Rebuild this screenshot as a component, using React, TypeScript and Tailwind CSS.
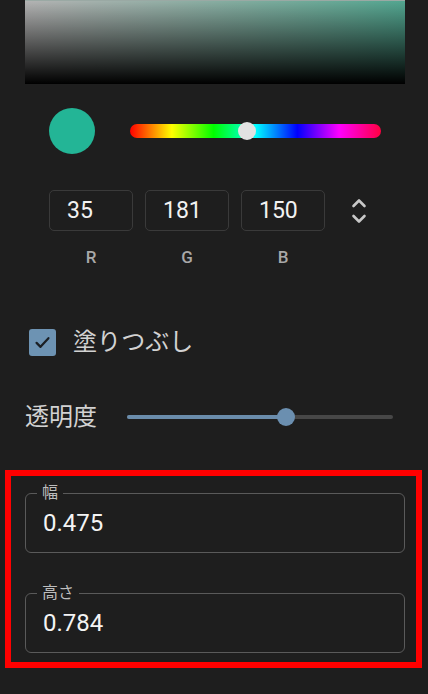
import React from 'react';

const font = { fontFamily: 'Roboto, "Noto Sans CJK JP", sans-serif' };

function RgbBox({ value }: { value: number }) {
  return (
    <div className="w-[84px] h-[41px] rounded-[5px] border border-[#3a3a3a] flex items-center pl-[17px] pt-[2px] text-[23px] text-[#f2f2f2]">
      {value}
    </div>
  );
}

function OutlinedField({ label, value }: { label: string; value: string }) {
  return (
    <fieldset className="border border-[#5a5a5a] rounded-[6px] h-[68px] px-[17px]">
      <legend className="ml-[-6px] px-[5px] text-[16px] leading-[16px] text-[#bdbdbd]">{label}</legend>
      <div className="text-[24px] leading-[28px] text-[#f4f4f4] mt-[8px]">{value}</div>
    </fieldset>
  );
}

export default function App() {
  const rgb = [35, 181, 150];
  return (
    <div className="w-[428px] h-[694px] bg-[#1e1e1e] overflow-hidden" style={font}>
      {/* saturation / value area */}
      <div className="ml-[25px] w-[380px] h-[84px] bg-gradient-to-r from-[#b3b3b3] to-[#52a690] border-t border-[#9aa9a4]">
        <div className="w-full h-full bg-gradient-to-b from-black/0 to-black" />
      </div>

      {/* swatch + hue */}
      <div className="flex items-center mt-[24px] pl-[49px] pr-[47px] gap-[35px]">
        <div className="w-[46px] h-[46px] rounded-full bg-[#23b596] shrink-0" />
        <div className="relative flex-1 h-[14px] rounded-full bg-[linear-gradient(to_right,#ff0000,#ffff00,#00ff00,#00ffff,#0000ff,#ff00ff,#ff0040)]">
          <div className="absolute left-[108px] top-[-2px] w-[18px] h-[18px] rounded-full bg-[#e2e2e2]" />
        </div>
      </div>

      {/* rgb inputs */}
      <div className="flex items-center mt-[36px] pl-[49px]">
        <div className="flex gap-[12px]">
          {rgb.map((v, i) => (
            <RgbBox key={i} value={v} />
          ))}
        </div>
        <svg className="ml-[26px]" width="16" height="28" viewBox="0 0 16 28" fill="none" stroke="#c8c8c8" strokeWidth="2.6" strokeLinecap="round" strokeLinejoin="round">
          <path d="M2.5 9 L8 3.5 L13.5 9" />
          <path d="M2.5 19 L8 24.5 L13.5 19" />
        </svg>
      </div>
      <div className="flex gap-[12px] pl-[49px] mt-[16px]">
        {['R', 'G', 'B'].map((l) => (
          <div key={l} className="w-[84px] text-center text-[17px] leading-[20px] font-medium text-[#a8a8a8]">
            {l}
          </div>
        ))}
      </div>

      {/* fill checkbox */}
      <div className="flex items-center mt-[60px] pl-[29px] gap-[17px]">
        <div className="w-[27px] h-[27px] rounded-[3px] bg-[#6d93b3] flex items-center justify-center">
          <svg width="19" height="19" viewBox="0 0 24 24" fill="none" stroke="#1b1f24" strokeWidth="2.8" strokeLinecap="round" strokeLinejoin="round">
            <path d="M4.5 12.5 L9.5 17.5 L19.5 6.5" />
          </svg>
        </div>
        <span className="text-[24px] leading-[30px] text-[#d2d2d2]">塗りつぶし</span>
      </div>

      {/* opacity */}
      <div className="flex items-center mt-[45px] pl-[25px] pr-[35px]">
        <span className="text-[24px] leading-[30px] text-[#d2d2d2] w-[102px]">透明度</span>
        <div className="relative flex-1 h-[4px] rounded-full bg-[#474747]">
          <div className="absolute left-0 top-0 h-full w-[159px] rounded-full bg-[#6a8cab]" />
          <div className="absolute left-[150px] top-[-7px] w-[18px] h-[18px] rounded-full bg-[#6b8fb0]" />
        </div>
      </div>

      {/* size fields (highlighted) */}
      <div className="mt-[38px] ml-[5px] w-[417px] border-[6px] border-[#ff0000] pl-[14px] pr-[11px] pt-[9px] pb-[9px] flex flex-col gap-[32px]">
        <OutlinedField label="幅" value="0.475" />
        <OutlinedField label="高さ" value="0.784" />
      </div>
    </div>
  );
}
